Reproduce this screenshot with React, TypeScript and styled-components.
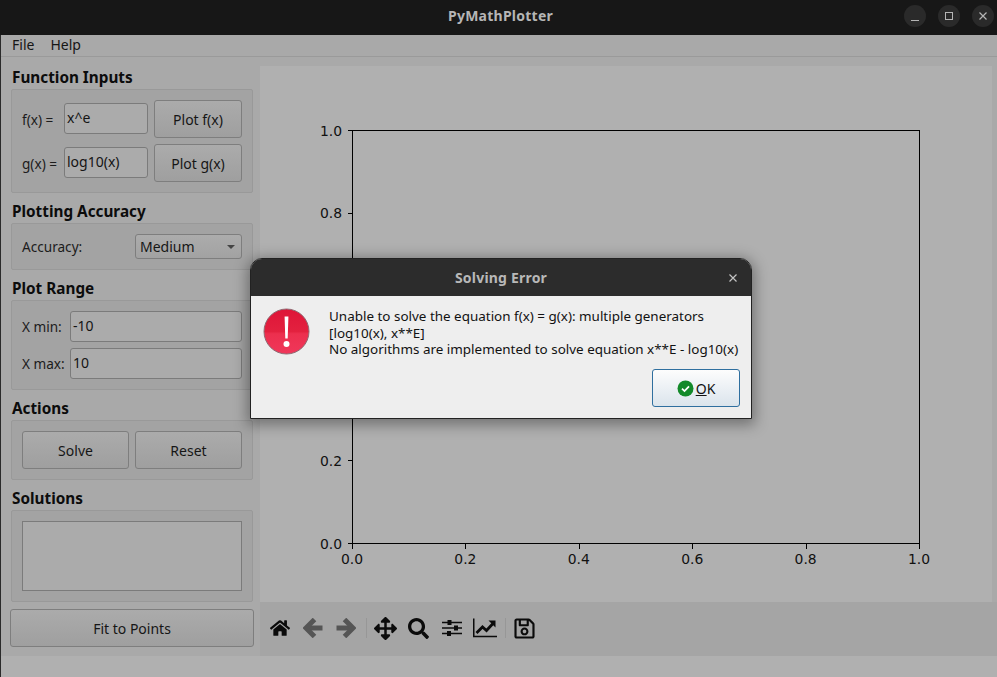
import React from 'react';
import styled, { createGlobalStyle } from 'styled-components';
import { FaHome, FaArrowsAlt, FaSearch, FaRegSave } from 'react-icons/fa';

const GlobalStyle = createGlobalStyle`
  html, body {
    margin: 0;
    padding: 0;
    background: #b0b0b0;
  }
  * {
    box-sizing: border-box;
  }
`;

const uiFont = `"Noto Sans", "Open Sans", sans-serif`;

const Window = styled.div`
  position: relative;
  width: 997px;
  height: 677px;
  overflow: hidden;
  display: flex;
  flex-direction: column;
  background: #b0b0b0;
  font-family: ${uiFont};
  font-size: 14px;
  color: #161616;
`;

const TitleBar = styled.header`
  position: relative;
  height: 35px;
  flex: none;
  background: #171717;
  display: flex;
  align-items: center;
  justify-content: flex-end;
  gap: 12px;
  padding: 0 3px 3px 0;
`;

const WindowTitle = styled.div`
  position: absolute;
  left: 4px;
  right: 0;
  top: 0;
  line-height: 32px;
  text-align: center;
  font-weight: 700;
  font-size: 14px;
  letter-spacing: 0.25px;
  color: #b5b5b5;
`;

const WinButton = styled.div`
  width: 22px;
  height: 22px;
  border-radius: 50%;
  background: #2a2a2a;
  display: flex;
  align-items: center;
  justify-content: center;
`;

const Content = styled.div`
  flex: 1;
  display: flex;
  flex-direction: column;
  border-left: 1px solid #2a2a2a;
  min-height: 0;
`;

const MenuBar = styled.nav`
  height: 22px;
  flex: none;
  background: #a9a9a9;
  border-bottom: 1px solid #9a9a9a;
  display: flex;
  align-items: center;
  gap: 16px;
  padding-left: 11px;
  padding-bottom: 1px;
`;

const MenuItem = styled.span`
  font-size: 14px;
  line-height: 20px;
`;

const Main = styled.div`
  height: 599px;
  flex: none;
  display: flex;
  background: #a9a9a9;
`;

const Sidebar = styled.aside`
  width: 259px;
  flex: none;
  display: flex;
  flex-direction: column;
  padding: 9px 6px 0 9px;
`;

const GroupTitle = styled.h2`
  margin: 0 0 0 2px;
  height: 23px;
  font-size: 15.3px;
  line-height: 22px;
  font-weight: 700;
  color: #0c0c0c;
`;

const GroupBox = styled.section`
  margin: 0 1px 7px;
  padding: 10px;
  background: #a3a3a3;
  border: 1px solid #999;
  border-radius: 2px;
  display: flex;
  flex-direction: column;
  gap: 6px;
`;

const Row = styled.div<{ $spread?: boolean }>`
  display: flex;
  align-items: center;
  justify-content: ${({ $spread }) => ($spread ? 'space-between' : 'flex-start')};
`;

const FieldLabel = styled.label<{ $width?: number }>`
  flex: none;
  width: ${({ $width }) => ($width ? `${$width}px` : 'auto')};
  font-size: 13.6px;
  color: #1c1c1c;
`;

const Field = styled.div<{ $grow?: boolean; $raised?: boolean }>`
  height: 31px;
  width: ${({ $grow }) => ($grow ? 'auto' : '84px')};
  flex: ${({ $grow }) => ($grow ? '1' : 'none')};
  margin-bottom: ${({ $raised }) => ($raised ? '1px' : '0')};
  background: #ababab;
  border: 1px solid #7b7b7b;
  border-radius: 3px;
  padding: 0 2px;
  line-height: 27px;
  font-size: 14px;
  color: #141414;
`;

const PushButton = styled.button<{ $width?: number }>`
  height: 38px;
  width: ${({ $width }) => ($width ? `${$width}px` : '100%')};
  flex: none;
  padding: 0;
  background: linear-gradient(#ababab, #9f9f9f);
  border: 1px solid #7e7e7e;
  border-radius: 3px;
  font-family: ${uiFont};
  font-size: 14px;
  color: #161616;
`;

const Spacer = styled.div`
  width: 6px;
  flex: none;
`;

const ComboBox = styled.div`
  width: 107px;
  height: 25px;
  background: linear-gradient(#acacac, #a2a2a2);
  border: 1px solid #7e7e7e;
  border-radius: 3px;
  padding: 0 6px 0 4px;
  display: flex;
  align-items: center;
  justify-content: space-between;
  font-size: 14px;
`;

const ComboArrow = styled.span`
  width: 0;
  height: 0;
  border-left: 4px solid transparent;
  border-right: 4px solid transparent;
  border-top: 4px solid #444;
`;

const ButtonPair = styled.div`
  display: grid;
  grid-template-columns: 1fr 1fr;
  gap: 6px;
`;

const SolutionsArea = styled.div`
  height: 70px;
  background: #ababab;
  border: 1px solid #7b7b7b;
`;

const RightColumn = styled.div`
  flex: 1;
  min-width: 0;
  display: flex;
  flex-direction: column;
  padding-top: 9px;
`;

const Canvas = styled.div`
  height: 536px;
  flex: none;
  margin-right: 5px;
  background: #b0b0b0;
`;

const Toolbar = styled.div`
  flex: 1;
  background: #a5a5a5;
  display: flex;
  align-items: center;
  padding: 0 0 2px 3px;
`;

const ToolButton = styled.div<{ $dim?: boolean }>`
  width: 33px;
  height: 33px;
  flex: none;
  display: flex;
  align-items: center;
  justify-content: center;
  color: ${({ $dim }) => ($dim ? '#555' : '#0b0b0b')};
`;

const ToolSeparator = styled.div`
  width: 1px;
  height: 20px;
  margin: 0 2px 0 4px;
  background: #979797;
  flex: none;
`;

const Footer = styled.div`
  flex: 1;
  background: #b0b0b0;
`;

const Dialog = styled.div`
  position: absolute;
  left: 250px;
  top: 258px;
  width: 502px;
  height: 161px;
  display: flex;
  flex-direction: column;
  background: #eeeeee;
  border: 1px solid #222;
  border-radius: 12px 12px 0 0;
  box-shadow: 0 3px 14px 3px rgba(0, 0, 0, 0.35);
  overflow: hidden;
`;

const DialogTitleBar = styled.div`
  position: relative;
  height: 37px;
  flex: none;
  background: #2c2c2c;
  display: flex;
  align-items: center;
  justify-content: flex-end;
  padding-right: 13px;
`;

const DialogTitle = styled.div`
  position: absolute;
  left: 0;
  right: 0;
  top: 0;
  line-height: 37px;
  text-align: center;
  font-weight: 700;
  font-size: 14px;
  letter-spacing: 0.2px;
  color: #b8b8b8;
`;

const DialogBody = styled.div`
  flex: 1;
  display: flex;
  padding: 12px 11px 11px 12px;
  gap: 19px;
  min-height: 0;
`;

const DialogIcon = styled.div`
  flex: none;
  width: 47px;
  height: 47px;
`;

const DialogMain = styled.div`
  flex: 1;
  min-width: 0;
  display: flex;
  flex-direction: column;
  justify-content: space-between;
`;

const Message = styled.div`
  font-size: 13.45px;
  line-height: 16.5px;
  color: #121212;
  white-space: nowrap;
`;

const DialogActions = styled.div`
  display: flex;
  justify-content: flex-end;
`;

const OkButton = styled.button`
  width: 88px;
  height: 38px;
  padding: 0;
  display: flex;
  align-items: center;
  justify-content: center;
  gap: 2px;
  background: linear-gradient(#fdfdfd, #dbe4ec);
  border: 1px solid #2f6f9f;
  border-radius: 3px;
  font-family: ${uiFont};
  font-size: 14px;
  color: #111;
`;

const Mnemonic = styled.span`
  text-decoration: underline;
`;

const TICKS = [0, 0.2, 0.4, 0.6, 0.8, 1];
const AXES = { left: 92.5, right: 659.5, top: 64.5, bottom: 477.5 };

const Plot: React.FC = () => {
  const w = AXES.right - AXES.left;
  const h = AXES.bottom - AXES.top;
  return (
    <svg width="732" height="536" viewBox="0 0 732 536" style={{ display: 'block' }}>
      <g stroke="#000" strokeWidth="1" shapeRendering="crispEdges">
        <rect x={AXES.left} y={AXES.top} width={w} height={h} fill="none" />
        {TICKS.map(t => (
          <React.Fragment key={t}>
            <line x1={AXES.left + t * w} x2={AXES.left + t * w} y1={AXES.bottom} y2={AXES.bottom + 5} />
            <line x1={AXES.left - 5} x2={AXES.left} y1={AXES.bottom - t * h} y2={AXES.bottom - t * h} />
          </React.Fragment>
        ))}
      </g>
      <g fontFamily='"DejaVu Sans", sans-serif' fontSize="13.9" fill="#111">
        {TICKS.map(t => (
          <React.Fragment key={t}>
            <text x={AXES.left + t * w - 0.5} y={AXES.bottom + 20} textAnchor="middle">{t.toFixed(1)}</text>
            <text x={AXES.left - 10.5} y={AXES.bottom - t * h + 5} textAnchor="end">{t.toFixed(1)}</text>
          </React.Fragment>
        ))}
      </g>
    </svg>
  );
};

const BackIcon: React.FC = () => (
  <svg width="20" height="20" viewBox="0 0 20 20" fill="none" stroke="#555" strokeWidth="5">
    <path d="M19.5 10H4" />
    <path d="M11.5 1.5L3 10l8.500 8.500" />
  </svg>
);

const ForwardIcon: React.FC = () => (
  <svg width="20" height="20" viewBox="0 0 20 20" fill="none" stroke="#555" strokeWidth="5">
    <path d="M0.500 10H16" />
    <path d="M8.500 1.500L17 10l-8.500 8.500" />
  </svg>
);

const SlidersIcon: React.FC = () => (
  <svg width="20" height="20" viewBox="0 0 20 20" fill="none" stroke="#0b0b0b" strokeWidth="1.5">
    <path d="M0 4.5h20M0 10h20M0 15.5h20" />
    <rect x="5.5" y="2" width="4" height="5" fill="#0b0b0b" stroke="none" />
    <rect x="12" y="7.5" width="4" height="5" fill="#0b0b0b" stroke="none" />
    <rect x="5" y="13" width="4" height="5" fill="#0b0b0b" stroke="none" />
  </svg>
);

const ChartIcon: React.FC = () => (
  <svg width="24" height="20" viewBox="0 0 24 20" fill="none" stroke="#0b0b0b">
    <path d="M0.75 0.5V18.5H24" strokeWidth="1.5" />
    <path d="M3.5 15L9.5 9l4 3.5L20 5.5" strokeWidth="2.8" />
    <path d="M15.5 2.5h7v7z" fill="#0b0b0b" stroke="none" />
  </svg>
);

const ErrorIcon: React.FC = () => (
  <svg width="47" height="47" viewBox="0 0 47 47">
    <defs>
      <linearGradient id="errFill" x1="0" y1="0" x2="0" y2="1">
        <stop offset="0" stopColor="#de1538" />
        <stop offset="0.5" stopColor="#e3213f" />
        <stop offset="0.55" stopColor="#ec2f4e" />
        <stop offset="1" stopColor="#f0375a" />
      </linearGradient>
    </defs>
    <circle cx="23.5" cy="23.5" r="22.5" fill="url(#errFill)" stroke="#8f6a72" strokeWidth="1" />
    <path d="M21.6 8.5h3.8l-0.7 22h-2.4z" fill="#fff" />
    <circle cx="23.5" cy="36" r="3" fill="#fff" />
  </svg>
);

const CheckIcon: React.FC = () => (
  <svg width="17" height="17" viewBox="0 0 17 17">
    <circle cx="8.5" cy="8.5" r="8" fill="#138a2a" />
    <path d="M5 8.7l2.5 2.4L12 6.4" fill="none" stroke="#fff" strokeWidth="1.8" />
  </svg>
);

const MinimizeIcon: React.FC = () => (
  <svg width="10" height="10" viewBox="0 0 10 10"><path d="M1 9.5h8" stroke="#b5b5b5" strokeWidth="1" /></svg>
);

const MaximizeIcon: React.FC = () => (
  <svg width="10" height="10" viewBox="0 0 10 10"><rect x="1.5" y="1.5" width="7" height="7" fill="none" stroke="#b5b5b5" strokeWidth="1" /></svg>
);

const CloseIcon: React.FC<{ color?: string }> = ({ color = '#b5b5b5' }) => (
  <svg width="10" height="10" viewBox="0 0 10 10"><path d="M1.5 1.5l7 7M8.5 1.5l-7 7" stroke={color} strokeWidth="1.2" /></svg>
);

const App: React.FC = () => (
  <>
    <GlobalStyle />
    <Window>
      <TitleBar>
        <WindowTitle>PyMathPlotter</WindowTitle>
        <WinButton><MinimizeIcon /></WinButton>
        <WinButton><MaximizeIcon /></WinButton>
        <WinButton><CloseIcon /></WinButton>
      </TitleBar>
      <Content>
        <MenuBar>
          <MenuItem>File</MenuItem>
          <MenuItem>Help</MenuItem>
        </MenuBar>
        <Main>
          <Sidebar>
            <GroupTitle>Function Inputs</GroupTitle>
            <GroupBox>
              <Row>
                <FieldLabel $width={42}>f(x) =</FieldLabel>
                <Field $raised>x^e</Field>
                <Spacer />
                <PushButton $width={88}>Plot f(x)</PushButton>
              </Row>
              <Row>
                <FieldLabel $width={42}>g(x) =</FieldLabel>
                <Field $raised>log10(x)</Field>
                <Spacer />
                <PushButton $width={88}>Plot g(x)</PushButton>
              </Row>
            </GroupBox>
            <GroupTitle>Plotting Accuracy</GroupTitle>
            <GroupBox>
              <Row $spread>
                <FieldLabel>Accuracy:</FieldLabel>
                <ComboBox>Medium<ComboArrow /></ComboBox>
              </Row>
            </GroupBox>
            <GroupTitle>Plot Range</GroupTitle>
            <GroupBox>
              <Row>
                <FieldLabel $width={48}>X min:</FieldLabel>
                <Field $grow>-10</Field>
              </Row>
              <Row>
                <FieldLabel $width={48}>X max:</FieldLabel>
                <Field $grow>10</Field>
              </Row>
            </GroupBox>
            <GroupTitle>Actions</GroupTitle>
            <GroupBox>
              <ButtonPair>
                <PushButton>Solve</PushButton>
                <PushButton>Reset</PushButton>
              </ButtonPair>
            </GroupBox>
            <GroupTitle>Solutions</GroupTitle>
            <GroupBox>
              <SolutionsArea />
            </GroupBox>
            <PushButton>Fit to Points</PushButton>
          </Sidebar>
          <RightColumn>
            <Canvas><Plot /></Canvas>
            <Toolbar>
              <ToolButton><FaHome size={20} /></ToolButton>
              <ToolButton $dim><BackIcon /></ToolButton>
              <ToolButton $dim><ForwardIcon /></ToolButton>
              <ToolSeparator />
              <ToolButton><FaArrowsAlt size={23} /></ToolButton>
              <ToolButton><FaSearch size={21} /></ToolButton>
              <ToolButton><SlidersIcon /></ToolButton>
              <ToolButton><ChartIcon /></ToolButton>
              <ToolSeparator />
              <ToolButton><FaRegSave size={23} /></ToolButton>
            </Toolbar>
          </RightColumn>
        </Main>
        <Footer />
      </Content>
      <Dialog>
        <DialogTitleBar>
          <DialogTitle>Solving Error</DialogTitle>
          <CloseIcon color="#c4c4c4" />
        </DialogTitleBar>
        <DialogBody>
          <DialogIcon><ErrorIcon /></DialogIcon>
          <DialogMain>
            <Message>
              Unable to solve the equation f(x) = g(x): multiple generators<br />
              [log10(x), x**E]<br />
              No algorithms are implemented to solve equation x**E - log10(x)
            </Message>
            <DialogActions>
              <OkButton><CheckIcon /><span><Mnemonic>O</Mnemonic>K</span></OkButton>
            </DialogActions>
          </DialogMain>
        </DialogBody>
      </Dialog>
    </Window>
  </>
);

export default App;
